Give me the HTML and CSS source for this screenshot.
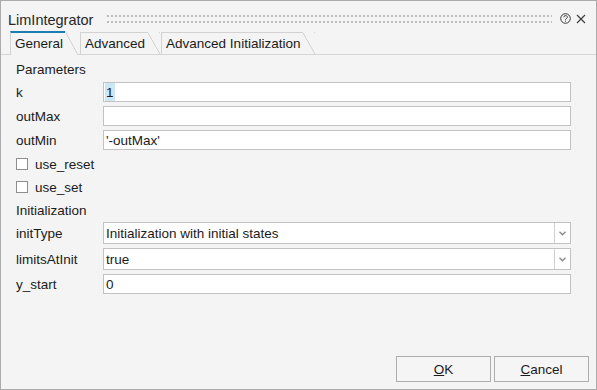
FILE: index.html
```html
<!DOCTYPE html>
<html>
<head>
<meta charset="utf-8">
<link rel="stylesheet" href="styles.css">
</head>
<body>
<div class="dialog">
  <div class="titlebar">
    <span class="title">LimIntegrator</span>
    <div class="grip"><div class="dots"></div><div class="dots"></div></div>
    <svg class="help" width="11" height="11" viewBox="0 0 11 11">
      <circle cx="5.5" cy="5.5" r="4.8" fill="none" stroke="#3a3a3a" stroke-width="1"/>
      <path d="M3.9 4.3 A1.7 1.6 0 1 1 6.4 5.6 C5.8 5.9 5.5 6.2 5.5 6.8" fill="none" stroke="#3a3a3a" stroke-width="1"/>
      <rect x="5" y="7.6" width="1" height="1" fill="#3a3a3a"/>
    </svg>
    <svg class="close" width="10" height="10" viewBox="0 0 10 10">
      <path d="M1 1 L9 9 M9 1 L1 9" stroke="#3a3a3a" stroke-width="1.1"/>
    </svg>
  </div>

  <div class="tabbar">
    <div class="tab active"><span class="tab-label">General</span><span class="slant"></span></div>
    <div class="tab"><span class="tab-label">Advanced</span><span class="slant"></span></div>
    <div class="tab"><span class="tab-label">Advanced Initialization</span><span class="slant"></span></div>
  </div>

  <div class="panel">
    <div class="heading">Parameters</div>
    <div class="row first">
      <span class="label">k</span>
      <div class="input"><span class="selected">1</span></div>
    </div>
    <div class="row">
      <span class="label">outMax</span>
      <div class="input"></div>
    </div>
    <div class="row">
      <span class="label">outMin</span>
      <div class="input">'-outMax'</div>
    </div>
    <div class="check-row">
      <span class="box"></span><span>use_reset</span>
    </div>
    <div class="check-row tight">
      <span class="box"></span><span>use_set</span>
    </div>
    <div class="heading section">Initialization</div>
    <div class="row tall close-top">
      <span class="label">initType</span>
      <div class="input select">
        <span class="select-text">Initialization with initial states</span>
        <span class="select-btn">
          <svg width="7" height="5" viewBox="0 0 7 5"><path d="M0.5 0.8 L3.5 3.8 L6.5 0.8" fill="none" stroke="#8a8a8a" stroke-width="1.4"/></svg>
        </span>
      </div>
    </div>
    <div class="row tall">
      <span class="label">limitsAtInit</span>
      <div class="input select">
        <span class="select-text">true</span>
        <span class="select-btn">
          <svg width="7" height="5" viewBox="0 0 7 5"><path d="M0.5 0.8 L3.5 3.8 L6.5 0.8" fill="none" stroke="#8a8a8a" stroke-width="1.4"/></svg>
        </span>
      </div>
    </div>
    <div class="row">
      <span class="label">y_start</span>
      <div class="input">0</div>
    </div>
  </div>

  <div class="footer">
    <button class="btn"><u>O</u>K</button>
    <button class="btn"><u>C</u>ancel</button>
  </div>
</div>
</body>
</html>
```

FILE: styles.css
```css
html, body {
  margin: 0;
  padding: 0;
  background: #f4f4f4;
}

body {
  font-family: "Liberation Sans", Arial, sans-serif;
  font-size: 13.5px;
  color: #1b1b1b;
}

.dialog {
  width: 597px;
  height: 390px;
  box-sizing: border-box;
  border: 1px solid #ababab;
  background: #f4f4f4;
  display: flex;
  flex-direction: column;
}

/* Title bar */
.titlebar {
  display: flex;
  align-items: flex-start;
  height: 30px;
  box-sizing: border-box;
  padding: 11px 10px 0 7px;
}

.title {
  font-size: 14.5px;
  line-height: 16px;
  color: #262626;
}

.grip {
  flex: 1;
  margin: 3px 8px 0 14px;
}

.dots {
  height: 2px;
  background: repeating-linear-gradient(90deg, #bcbcbc 0 2px, transparent 2px 4px);
}

.dots + .dots {
  margin-top: 4px;
}

.help {
  margin-top: 1px;
}

.close {
  margin: 2px 0 0 5px;
}

/* Tabs */
.tabbar {
  display: flex;
  align-items: flex-end;
  gap: 1px;
  height: 23px;
  padding-left: 9px;
  border-bottom: 1px solid #d6d6d6;
}

.tab {
  display: flex;
  height: 22px;
  background: #f4f4f4;
}

.tab-label {
  display: flex;
  align-items: center;
  padding: 0 3px 0 4px;
  border-top: 1px solid #d2d2d2;
  border-left: 1px solid #d2d2d2;
}

.slant {
  width: 12px;
  border-top: 1px solid transparent;
  background: linear-gradient(to top right, transparent calc(50% - 0.7px), #c9c9c9 50%, transparent calc(50% + 0.7px));
}

.tab.active {
  height: 24px;
  margin-bottom: -1px;
  margin-right: 1px;
}

.tab.active .tab-label {
  border-top: 2px solid #1b7db3;
  padding: 0 2px 1px 4px;
}

.tab.active .slant {
  width: 13px;
  border-top: 0;
}

/* Panel */
.panel {
  display: flex;
  flex-direction: column;
  padding: 5px 25px 0 15px;
}

.heading {
  height: 20px;
  line-height: 20px;
}

.heading.section {
  margin-top: 4px;
}

.row {
  display: grid;
  grid-template-columns: 87px 1fr;
  align-items: center;
  height: 20px;
  margin-top: 4px;
}

.row.first {
  margin-top: 2px;
}

.row.tall {
  height: 22px;
}

.row.close-top {
  margin-top: 1px;
}

.input {
  box-sizing: border-box;
  height: 100%;
  border: 1px solid #c2c2c2;
  background: #ffffff;
  padding-left: 2px;
  display: flex;
  align-items: center;
  white-space: nowrap;
}

.selected {
  background: #cce8f7;
  align-self: stretch;
  display: flex;
  align-items: center;
  padding: 0 1px;
  margin-left: -1px;
}

.select {
  padding-left: 0;
}

.select-text {
  flex: 1;
  padding-left: 2px;
}

.select-btn {
  width: 15px;
  align-self: stretch;
  border-left: 1px solid #d0d0d0;
  display: flex;
  align-items: center;
  justify-content: center;
}

.check-row {
  display: flex;
  align-items: center;
  height: 20px;
  margin-top: 4px;
}

.check-row.tight {
  margin-top: 3px;
}

.box {
  width: 12px;
  height: 12px;
  box-sizing: border-box;
  border: 1px solid #8e8e8e;
  background: #ffffff;
  margin-right: 7px;
}

/* Footer */
.footer {
  margin-top: auto;
  display: flex;
  justify-content: flex-end;
  gap: 3px;
  padding: 0 7px 7px 0;
}

.btn {
  width: 95px;
  height: 26px;
  box-sizing: border-box;
  border: 1px solid #adadad;
  background: #f5f5f5;
  font-family: "Liberation Sans", Arial, sans-serif;
  font-size: 13.5px;
  color: #1b1b1b;
  padding: 0;
}
```
